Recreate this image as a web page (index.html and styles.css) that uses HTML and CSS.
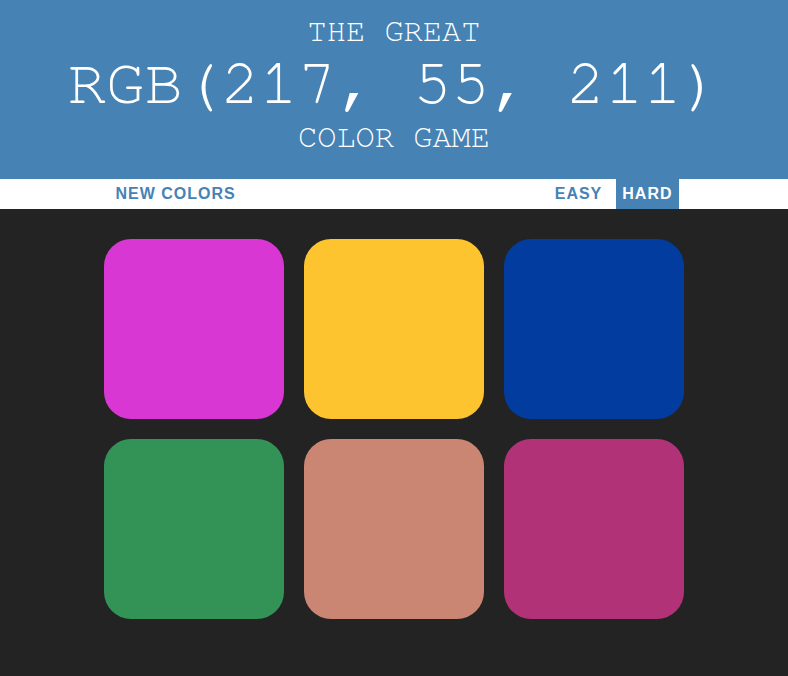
FILE: index.html
```html
<!DOCTYPE html>
<html>
<head>
<meta charset="utf-8">
<title>Color Game</title>
<link rel="stylesheet" href="styles.css">
</head>
<body>
<header class="banner">
  <h1 class="title">
    <span class="title-line">The Great</span>
    <span class="color-display">RGB(217, 55, 211)</span>
    <span class="title-line">Color Game</span>
  </h1>
</header>
<nav class="stripe">
  <button class="btn btn-reset">New Colors</button>
  <span class="message"></span>
  <button class="btn mode">Easy</button>
  <button class="btn mode mode-hard selected">Hard</button>
</nav>
<main class="board">
  <div class="square sq-1"></div>
  <div class="square sq-2"></div>
  <div class="square sq-3"></div>
  <div class="square sq-4"></div>
  <div class="square sq-5"></div>
  <div class="square sq-6"></div>
</main>
</body>
</html>
```
FILE: styles.css
```css
html, body {
  margin: 0;
  padding: 0;
}
body {
  background: #232323;
  font-family: "Liberation Sans", Arial, sans-serif;
}
.banner {
  background: #4682b4;
}
.title {
  margin: 0;
  padding: 14px 0 24px;
  color: #fff;
  font-family: "Nimbus Mono PS", "FreeMono", Courier, "Courier New", monospace;
  font-weight: normal;
  font-size: 32px;
  line-height: 1.1;
  text-transform: uppercase;
  text-align: center;
  display: flex;
  flex-direction: column;
}
.color-display {
  font-size: 64px;
  line-height: 1.1;
}
.stripe {
  background: #fff;
  height: 30px;
  display: flex;
  justify-content: center;
  align-items: stretch;
}
.btn {
  border: none;
  background: #fff;
  color: #4682b4;
  font-family: "Liberation Sans", Arial, sans-serif;
  font-weight: 700;
  font-size: 16px;
  letter-spacing: 1px;
  text-transform: uppercase;
  padding: 0 6px;
  margin: 0;
  height: 100%;
  cursor: pointer;
}
.message {
  width: 300px;
  margin: 0 3px 0 4px;
}
.mode-hard {
  margin-left: 8px;
}
.selected {
  background: #4682b4;
  color: #fff;
}
.board {
  width: 600px;
  margin: 20px auto;
  padding: 10px;
  box-sizing: border-box;
  display: grid;
  grid-template-columns: repeat(3, 180px);
  gap: 20px;
}
.square {
  width: 180px;
  height: 180px;
  border-radius: 15%;
}
.sq-1 { background: rgb(217, 55, 211); }
.sq-2 { background: #fec42f; }
.sq-3 { background: #023c9e; }
.sq-4 { background: #339357; }
.sq-5 { background: #cb8573; }
.sq-6 { background: #b23278; }
```
